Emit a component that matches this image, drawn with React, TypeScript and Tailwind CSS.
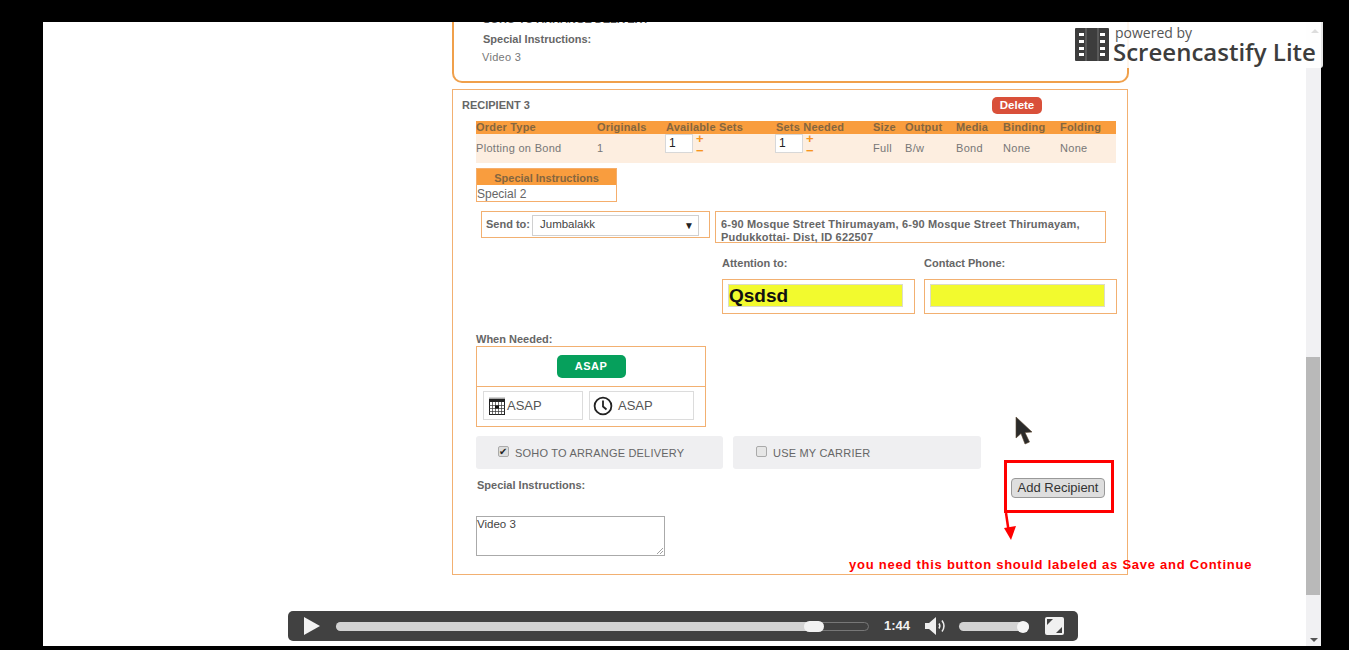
const orderCols = 'grid grid-cols-[121px_69px_110px_97px_32px_51px_47px_57px_56px] w-[640px]'

function SetsStepper() {
  return (
    <div className="flex items-start gap-[3px] -ml-[1px]">
      <div className="w-[28px] h-[19px] bg-white border border-[#d8d8d8] text-[12px] leading-[17px] pl-[3px] text-[#222]">1</div>
      <div className="flex flex-col gap-[2px] text-[#f7941d] font-bold text-[13px] leading-[10px]">
        <span>+</span>
        <span>−</span>
      </div>
    </div>
  )
}

function CalendarIcon() {
  return (
    <svg width="16" height="18" viewBox="0 0 16 18" className="shrink-0">
      <rect x="0.5" y="2.5" width="15" height="15" fill="#fff" stroke="#222" />
      <rect x="0.5" y="2" width="15" height="3" fill="#222" />
      <path d="M1 0.5v2M3 0.5v2M5 0.5v2M7 0.5v2M9 0.5v2M11 0.5v2M13 0.5v2M15 0.5v2" stroke="#222" strokeWidth="0.8" />
      <path d="M0 8.5h16M0 11.5h16M0 14.5h16M3.5 5v13M6.5 5v13M9.5 5v13M12.5 5v13" stroke="#333" strokeWidth="0.7" />
      <rect x="6" y="8.5" width="4" height="3" fill="#111" />
    </svg>
  )
}

function ClockIcon() {
  return (
    <svg width="20" height="20" viewBox="0 0 20 20" className="shrink-0">
      <circle cx="10" cy="10" r="8.4" fill="none" stroke="#222" strokeWidth="1.8" />
      <path d="M10 4.5V10.5L13.5 13.5" fill="none" stroke="#222" strokeWidth="1.8" />
    </svg>
  )
}

function FilmIcon() {
  return (
    <svg width="34" height="33" viewBox="0 0 34 33">
      <rect width="34" height="33" rx="1" fill="#3d3d3d" />
      <g fill="#fff">
        <rect x="4" y="5" width="5" height="3" />
        <rect x="4" y="12" width="5" height="3" />
        <rect x="4" y="19" width="5" height="3" />
        <rect x="4" y="25" width="5" height="3" />
        <rect x="25" y="5" width="5" height="3" />
        <rect x="25" y="12" width="5" height="3" />
        <rect x="25" y="19" width="5" height="3" />
        <rect x="25" y="25" width="5" height="3" />
      </g>
      <path d="M11 0v33M23 0v33" stroke="#fff" strokeWidth="0.6" opacity="0.5" />
    </svg>
  )
}

function SpeakerIcon() {
  return (
    <svg width="24" height="22" viewBox="0 0 24 22" className="shrink-0">
      <path d="M1 8H5L12 2V20L5 14H1Z" fill="#eee" />
      <path d="M15 8.5C16 10 16 12 15 13.5" fill="none" stroke="#eee" strokeWidth="1.5" />
      <path d="M18 5.5C20.5 9 20.5 13 18 16.5" fill="none" stroke="#eee" strokeWidth="1.5" />
    </svg>
  )
}

export default function App() {
  return (
    <div className="relative w-[1349px] h-[650px] bg-black overflow-hidden font-['Liberation_Sans',Arial,sans-serif] text-[#666]">
      <div className="pt-[22px] pl-[43px]">
        <div className="flex w-[1278px] h-[624px] bg-white">
          <div className="w-[1263px] pl-[409px] overflow-hidden">
            {/* previous recipient, cut off by the top of the video */}
            <div className="relative w-[677px] h-[61px] border-x-2 border-b-2 border-[#f0a04b] rounded-b-[10px] pl-[29px] overflow-hidden">
              <div className="text-[11px] leading-[14px] font-bold text-[#555] -mt-[10px]">SOHO TO ARRANGE DELIVERY</div>
              <div className="text-[11px] leading-[14px] font-bold text-[#666] mt-[6px]">Special Instructions:</div>
              <div className="text-[11px] leading-[14px] text-[#777] mt-[4px] -ml-[1px] tracking-[0.3px]">Video 3</div>
            </div>

            <div className="mt-[6px] w-[676px] h-[486px] border border-[#f2b071] pt-[8px]">
              <div className="flex pl-[9px] h-[23px] items-start">
                <span className="w-[530px] text-[11px] leading-[14px] font-bold text-[#666]">RECIPIENT 3</span>
                <button className="w-[50px] h-[17px] -mt-[1px] bg-[#d9503a] rounded-[5px] text-white text-[11.5px] leading-[17px] font-bold">Delete</button>
              </div>

              <div className="ml-[23px]">
                <div className={`${orderCols} h-[13px] bg-[#f99d3e] text-[11px] leading-[13px] font-bold tracking-[0.2px] text-[#85663f]`}>
                  <span>Order Type</span>
                  <span>Originals</span>
                  <span>Available Sets</span>
                  <span>Sets Needed</span>
                  <span>Size</span>
                  <span>Output</span>
                  <span>Media</span>
                  <span>Binding</span>
                  <span>Folding</span>
                </div>
                <div className={`${orderCols} h-[29px] bg-[#fdeee0] text-[11px] leading-[14px] tracking-[0.3px] text-[#777] items-start`}>
                  <span className="mt-[7px]">Plotting on Bond</span>
                  <span className="mt-[7px]">1</span>
                  <SetsStepper />
                  <SetsStepper />
                  <span className="mt-[7px]">Full</span>
                  <span className="mt-[7px]">B/w</span>
                  <span className="mt-[7px]">Bond</span>
                  <span className="mt-[7px]">None</span>
                  <span className="mt-[7px]">None</span>
                </div>

                <div className="mt-[5px] w-[141px] h-[34px] border border-[#f5ae6c]">
                  <div className="h-[16px] bg-[#f99d3e] text-center text-[11px] leading-[18px] font-bold text-[#85663f]">Special Instructions</div>
                  <div className="text-[12px] leading-[18px] text-[#666]">Special 2</div>
                </div>
              </div>

              <div className="flex ml-[28px] mt-[9px] items-start">
                <div className="flex items-center w-[229px] h-[27px] border border-[#f2b071] pl-[4px] gap-[2px]">
                  <span className="text-[11px] font-bold text-[#666]">Send to:</span>
                  <div className="flex items-center justify-between w-[167px] h-[21px] mt-[1px] bg-white border border-[#d0d0d0] pl-[7px] pr-[4px] text-[11.5px] text-[#444]">
                    <span>Jumbalakk</span>
                    <span className="text-[10px] text-[#222]">▼</span>
                  </div>
                </div>
                <div className="ml-[5px] w-[391px] h-[32px] border border-[#f2b071] pl-[5px] pt-[6px] text-[11px] leading-[13px] font-bold tracking-[0.18px] text-[#666]">
                  6-90 Mosque Street Thirumayam, 6-90 Mosque Street Thirumayam, Pudukkottai- Dist, ID 622507
                </div>
              </div>

              <div className="flex ml-[269px] mt-[13px] gap-[9px]">
                <div className="w-[193px]">
                  <div className="text-[11px] leading-[14px] font-bold text-[#666]">Attention to:</div>
                  <div className="mt-[9px] h-[35px] border border-[#f2b071] pl-[5px] pt-[4px]">
                    <div className="w-[175px] h-[23px] bg-[#f2fa2e] border border-[#dcdcc8] text-[19px] leading-[21px] font-bold text-[#111]">Qsdsd</div>
                  </div>
                </div>
                <div className="w-[193px]">
                  <div className="text-[11px] leading-[14px] font-bold text-[#666]">Contact Phone:</div>
                  <div className="mt-[9px] h-[35px] border border-[#f2b071] pl-[5px] pt-[4px]">
                    <div className="w-[175px] h-[23px] bg-[#f2fa2e] border border-[#dcdcc8]" />
                  </div>
                </div>
              </div>

              <div className="ml-[23px] mt-[18px] text-[11px] leading-[14px] font-bold text-[#666]">When Needed:</div>
              <div className="ml-[23px] w-[230px] h-[81px] border border-[#f2b071]">
                <div className="h-[40px] flex justify-center items-center border-b border-[#f2b071]">
                  <button className="w-[69px] h-[23px] bg-[#06a05c] rounded-[5px] text-white text-[11px] font-bold tracking-[0.5px]">ASAP</button>
                </div>
                <div className="flex pl-[6px] pt-[4px] gap-[6px]">
                  <div className="flex items-center w-[100px] h-[29px] bg-white border border-[#dcdcdc] pl-[5px] gap-[2px] text-[13px] text-[#555]">
                    <CalendarIcon />
                    <span>ASAP</span>
                  </div>
                  <div className="flex items-center w-[105px] h-[29px] bg-white border border-[#dcdcdc] pl-[3px] gap-[5px] text-[13px] text-[#555]">
                    <ClockIcon />
                    <span>ASAP</span>
                  </div>
                </div>
              </div>

              <div className="flex ml-[23px] mt-[9px] gap-[10px]">
                <div className="flex items-center w-[247px] h-[33px] pt-[1px] bg-[#efeff1] rounded-[3px] pl-[22px] gap-[6px] text-[11px] tracking-[0.2px] text-[#666]">
                  <span className="flex items-center justify-center w-[11px] h-[11px] bg-[#ddd] border border-[#aaa] rounded-[2px] -mt-[3px] text-[10px] leading-none text-[#222]">✔</span>
                  <span>SOHO TO ARRANGE DELIVERY</span>
                </div>
                <div className="flex items-center w-[248px] h-[33px] pt-[1px] bg-[#efeff1] rounded-[3px] pl-[23px] gap-[6px] text-[11px] tracking-[0.2px] text-[#666]">
                  <span className="w-[11px] h-[11px] bg-[#e6e6e6] border border-[#aaa] rounded-[2px] -mt-[3px]" />
                  <span>USE MY CARRIER</span>
                </div>
              </div>

              <div className="flex ml-[24px] mt-[9px] items-start">
                <div className="w-[534px] text-[11px] leading-[14px] font-bold text-[#666]">Special Instructions:</div>
                <button className="w-[94px] h-[20px] bg-[#dedede] border border-[#999] rounded-[4px] text-[13px] leading-[18px] text-[#333]">Add Recipient</button>
              </div>

              <div className="relative ml-[23px] mt-[18px] w-[189px] h-[40px] border border-[#aaa] text-[11.5px] leading-[14px] text-[#444]">
                Video 3
                <svg width="8" height="8" viewBox="0 0 8 8" className="absolute right-0 bottom-0">
                  <path d="M1 7L7 1M4 7L7 4" stroke="#888" strokeWidth="0.8" />
                </svg>
              </div>
            </div>
          </div>

          {/* page scrollbar */}
          <div className="relative w-[15px] h-full bg-[#f1f1f3]">
            <div className="absolute top-[335px] left-0 w-[14px] h-[238px] bg-[#b9b9b9]" />
            <span className="absolute bottom-[4px] left-[4px] w-0 h-0 border-x-[4px] border-x-transparent border-t-[4px] border-t-[#555]" />
          </div>
        </div>
      </div>

      {/* screen recorder watermark */}
      <div className="absolute top-[22px] left-[1070px] w-[253px] h-[46px] bg-white/90 rounded-br-[3px] font-['Open_Sans',sans-serif]">
        <div className="absolute left-[5px] top-[6px]"><FilmIcon /></div>
        <div className="absolute left-[45px] top-[3px] text-[14px] leading-[15px] text-[#555]">powered by</div>
        <div className="absolute left-[43px] top-[18px] text-[24px] leading-[24px] font-semibold text-[#3d3d3d] whitespace-nowrap">Screencastify Lite</div>
        <span className="absolute right-[4px] top-[7px] w-0 h-0 border-x-[4px] border-x-transparent border-b-[4px] border-b-[#ddd]" />
      </div>

      {/* annotation over the video */}
      <div className="absolute left-[1004px] top-[460px] w-[110px] h-[53px] border-[3px] border-[#ff0000]" />
      <svg width="14" height="30" viewBox="0 0 14 30" className="absolute left-[1003px] top-[512px]">
        <path d="M3 1L5.5 18" stroke="#ff0000" strokeWidth="2.5" fill="none" />
        <path d="M1 16L13 14L8 28Z" fill="#ff0000" />
      </svg>
      <div className="absolute left-[849px] top-[557px] text-[13px] leading-[16px] font-bold tracking-[0.75px] text-[#ff0000] whitespace-nowrap">you need this button should labeled as Save and Continue</div>

      {/* mouse cursor */}
      <svg width="20" height="30" viewBox="0 0 20 30" className="absolute left-[1014px] top-[416px]">
        <path d="M2 1V22L7 17.5L11 28L15.5 26L11 16.5L18 16Z" fill="#2b2b2b" stroke="#5b4630" strokeWidth="0.6" />
      </svg>

      {/* video controls */}
      <div className="absolute left-[288px] top-[611px] w-[790px] h-[30px] bg-[#414141] rounded-[5px] flex items-center">
        <svg width="18" height="20" viewBox="0 0 18 20" className="ml-[15px]">
          <path d="M1 1L17 10L1 19Z" fill="#f2f2f2" />
        </svg>
        <div className="relative ml-[15px] w-[533px] h-[9px] rounded-full border border-[#777]">
          <div className="absolute -left-px -top-px w-[478px] h-[9px] rounded-l-full bg-[#d2d2d2]" />
          <div className="absolute left-[467px] -top-[2px] w-[20px] h-[11px] rounded-full bg-[#f2f2f2]" />
        </div>
        <span className="ml-[15px] w-[26px] text-[13px] font-bold text-[#f2f2f2]">1:44</span>
        <div className="ml-[14px]"><SpeakerIcon /></div>
        <div className="relative ml-[11px] w-[70px] h-[9px] rounded-full bg-[#d2d2d2]">
          <div className="absolute right-0 -top-[1px] w-[12px] h-[12px] rounded-full bg-[#f5f5f5]" />
        </div>
        <div className="relative ml-[16px] w-[19px] h-[18px] bg-[#f0f0f0] rounded-[2px]">
          <span className="absolute left-[2px] top-[2px] w-0 h-0 border-t-[6px] border-t-[#414141] border-r-[6px] border-r-transparent" />
          <span className="absolute right-[2px] bottom-[2px] w-0 h-0 border-b-[6px] border-b-[#414141] border-l-[6px] border-l-transparent" />
        </div>
      </div>
    </div>
  )
}
